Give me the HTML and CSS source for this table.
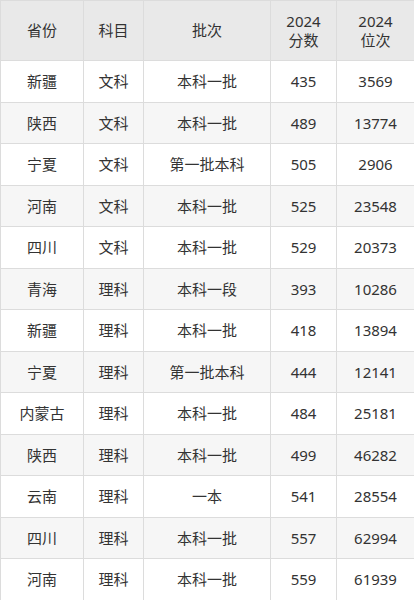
FILE: index.html
```html
<!DOCTYPE html>
<html lang="zh">
<head>
<meta charset="utf-8">
<link rel="stylesheet" href="styles.css">
</head>
<body>
<table class="score-table">
  <colgroup>
    <col class="c1"><col class="c2"><col class="c3"><col class="c4"><col class="c5">
  </colgroup>
  <thead>
    <tr><th>省份</th><th>科目</th><th>批次</th><th>2024<br>分数</th><th>2024<br>位次</th></tr>
  </thead>
  <tbody>
    <tr><td>新疆</td><td>文科</td><td>本科一批</td><td>435</td><td>3569</td></tr>
    <tr><td>陕西</td><td>文科</td><td>本科一批</td><td>489</td><td>13774</td></tr>
    <tr><td>宁夏</td><td>文科</td><td>第一批本科</td><td>505</td><td>2906</td></tr>
    <tr><td>河南</td><td>文科</td><td>本科一批</td><td>525</td><td>23548</td></tr>
    <tr><td>四川</td><td>文科</td><td>本科一批</td><td>529</td><td>20373</td></tr>
    <tr><td>青海</td><td>理科</td><td>本科一段</td><td>393</td><td>10286</td></tr>
    <tr><td>新疆</td><td>理科</td><td>本科一批</td><td>418</td><td>13894</td></tr>
    <tr><td>宁夏</td><td>理科</td><td>第一批本科</td><td>444</td><td>12141</td></tr>
    <tr><td>内蒙古</td><td>理科</td><td>本科一批</td><td>484</td><td>25181</td></tr>
    <tr><td>陕西</td><td>理科</td><td>本科一批</td><td>499</td><td>46282</td></tr>
    <tr><td>云南</td><td>理科</td><td>一本</td><td>541</td><td>28554</td></tr>
    <tr><td>四川</td><td>理科</td><td>本科一批</td><td>557</td><td>62994</td></tr>
    <tr><td>河南</td><td>理科</td><td>本科一批</td><td>559</td><td>61939</td></tr>
  </tbody>
</table>
</body>
</html>
```
FILE: styles.css
```css
html, body {
  margin: 0;
  padding: 0;
  background: #ffffff;
}
.score-table {
  width: 414px;
  border-collapse: collapse;
  table-layout: fixed;
  font-family: "Noto Sans", "Noto Sans CJK SC", sans-serif;
  font-size: 15px;
  color: #333333;
}
.c1 { width: 83px; }
.c2 { width: 60px; }
.c3 { width: 127px; }
.c4 { width: 66px; }
.c5 { width: 78px; }
.score-table th,
.score-table td {
  border: 1px solid #dcdcdc;
  text-align: center;
  vertical-align: middle;
  padding: 0;
}
.score-table th {
  background: #e9e9e9;
  font-weight: normal;
  height: 59px;
  line-height: 19px;
}
.score-table td {
  height: 40.5px;
  line-height: 20px;
}
.score-table tbody tr:nth-child(even) td {
  background: #f6f6f6;
}
```
